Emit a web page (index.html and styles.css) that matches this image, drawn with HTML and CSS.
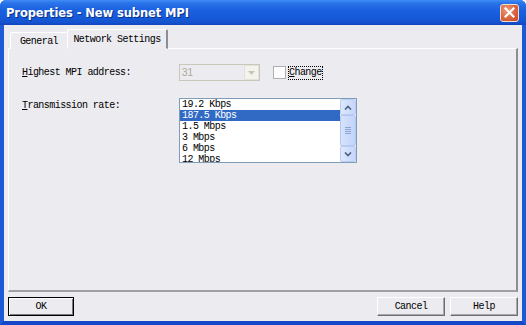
FILE: index.html
```html
<!DOCTYPE html>
<html>
<head>
<meta charset="utf-8">
<link rel="stylesheet" href="styles.css">
</head>
<body>
<div class="window">
  <div class="titlebar">
    <span class="title">Properties - New subnet MPI</span>
    <span class="close"><svg width="11" height="11" viewBox="0 0 11 11"><path d="M1.5 1.5 L9.5 9.5 M9.5 1.5 L1.5 9.5" stroke="#fff" stroke-width="2.2" stroke-linecap="square"/></svg></span>
  </div>
  <div class="client">
    <div class="tabs">
      <div class="tab">General</div>
      <div class="tab active">Network Settings</div>
    </div>
    <div class="panel">
      <div class="row">
        <span class="label"><u>H</u>ighest MPI address:</span>
        <div class="combo">
          <span class="combo-text">31</span>
          <span class="combo-btn"><svg width="7" height="4" viewBox="0 0 7 4"><path d="M0 0 H7 L3.5 4 Z" fill="#c7c5b2"/></svg></span>
        </div>
        <span class="check"></span>
        <span class="check-label"><u>C</u>hange</span>
      </div>
      <div class="row row-list">
        <span class="label"><u>T</u>ransmission rate:</span>
        <div class="listbox">
          <div class="items">
            <div class="item">19.2 Kbps</div>
            <div class="item sel">187.5 Kbps</div>
            <div class="item">1.5 Mbps</div>
            <div class="item">3 Mbps</div>
            <div class="item">6 Mbps</div>
            <div class="item">12 Mbps</div>
          </div>
          <div class="scroll">
            <div class="sbtn"><svg width="8" height="5" viewBox="0 0 8 5"><path d="M1 4.5 L4 1.5 L7 4.5" stroke="#4d6185" stroke-width="1.6" fill="none"/></svg></div>
            <div class="thumb"><span class="grip"></span><span class="grip"></span><span class="grip"></span><span class="grip"></span></div>
            <div class="track"></div>
            <div class="sbtn"><svg width="8" height="5" viewBox="0 0 8 5"><path d="M1 0.5 L4 3.5 L7 0.5" stroke="#4d6185" stroke-width="1.6" fill="none"/></svg></div>
          </div>
        </div>
      </div>
    </div>
    <div class="buttons">
      <button class="btn default">OK</button>
      <span class="spacer"></span>
      <button class="btn">Cancel</button>
      <button class="btn">Help</button>
    </div>
  </div>
</div>
</body>
</html>
```
FILE: styles.css
```css
html, body {
  margin: 0;
  padding: 0;
  background: #ffffff;
}
.window {
  width: 526px;
  height: 325px;
  box-sizing: border-box;
  display: flex;
  flex-direction: column;
  background: #0a55d8;
  border-left: 4px solid #1c5ad8;
  border-right: 4px solid #1c5ad8;
  border-bottom: 4px solid #1448c8;
  border-top-left-radius: 6px;
  border-top-right-radius: 6px;
}
.titlebar {
  height: 25px;
  margin: 0 -4px;
  padding: 0 4px 0 6px;
  display: flex;
  align-items: center;
  background: linear-gradient(#3f8df6 0%, #2a74ea 12%, #1a61e0 40%, #165ad8 70%, #1452cf 90%, #1144b8 100%);
  border-top-left-radius: 6px;
  border-top-right-radius: 6px;
}
.title {
  flex: 1;
  color: #ffffff;
  font-family: "DejaVu Sans", sans-serif;
  font-weight: bold;
  font-size: 11.5px;
  letter-spacing: -0.1px;
  text-shadow: 1px 1px 0 #0a2f8a;
  padding-top: 1px;
}
.close {
  width: 19px;
  height: 18px;
  margin-right: 3px;
  box-sizing: border-box;
  border: 1px solid #f4dccd;
  border-radius: 3px;
  background: radial-gradient(circle at 35% 30%, #ec9a76, #d8603a 60%, #c44a28);
  display: flex;
  align-items: center;
  justify-content: center;
}
.client {
  flex: 1;
  background: #ecebef;
  display: flex;
  flex-direction: column;
  padding: 4px 0 5px 4px;
  font-family: "Liberation Mono", "DejaVu Sans Mono", monospace;
  font-size: 10px;
  letter-spacing: -0.55px;
  color: #000;
}
.tabs {
  display: flex;
  align-items: flex-end;
  height: 20px;
  position: relative;
  z-index: 1;
  margin-bottom: -1px;
}
.tab {
  height: 17px;
  box-sizing: border-box;
  border: 1px solid #fff;
  border-bottom: none;
  border-right: 1px solid #8e8d92;
  border-radius: 2px 2px 0 0;
  padding: 3px 0 0 0;
  text-align: center;
  background: #ecebef;
}
.tab:first-child {
  margin-left: 2px;
  width: 57px;
  border-right: none;
}
.tab.active {
  height: 20px;
  width: 101px;
  padding-top: 4px;
  border-right: 2px solid #8e8d92;
  border-bottom: 1px solid #ecebef;
}
.panel {
  width: 510px;
  height: 244px;
  box-sizing: border-box;
  border-top: 1px solid #fff;
  border-left: 1px solid #fff;
  border-right: 2px solid #8e8d92;
  border-bottom: 2px solid #a09fa4;
  padding: 15px 0 0 13px;
}
.row {
  display: flex;
  align-items: center;
  height: 17px;
}
.label {
  width: 157px;
}
.combo {
  width: 81px;
  height: 17px;
  box-sizing: border-box;
  border: 1px solid #c9c7ba;
  background: #ecebef;
  display: flex;
  align-items: center;
}
.combo-text {
  flex: 1;
  color: #acaa99;
  padding-left: 2px;
  font-family: "Liberation Sans", sans-serif;
  font-size: 10px;
  letter-spacing: 0;
}
.combo-btn {
  width: 15px;
  height: 15px;
  box-sizing: border-box;
  border: 1px solid #e4e2da;
  background: #f4f3ee;
  display: flex;
  align-items: center;
  justify-content: center;
}
.check {
  width: 13px;
  height: 13px;
  box-sizing: border-box;
  border: 1px solid #1c5180;
  border-color: #b0afb0;
  background: #fdfdfd;
  margin-left: 13px;
}
.check-label {
  margin-left: 2px;
  padding: 1px 1px 2px 1px;
  outline: 1px dotted #000;
  outline-offset: -1px;
}
.row-list {
  margin-top: 17px;
  height: auto;
  align-items: flex-start;
}
.row-list .label {
  padding-top: 2px;
}
.listbox {
  width: 178px;
  height: 65px;
  box-sizing: border-box;
  border: 1px solid #7f9db9;
  background: #fff;
  display: flex;
  overflow: hidden;
}
.items {
  flex: 1;
  padding-top: 0;
}
.item {
  height: 11px;
  line-height: 11px;
  padding-left: 2px;
  white-space: nowrap;
}
.item.sel {
  background: #316ac5;
  color: #fff;
}
.scroll {
  width: 16px;
  display: flex;
  flex-direction: column;
  background: #f3f2ee;
  padding: 0 0 0 0;
}
.sbtn {
  height: 16px;
  box-sizing: border-box;
  border: 1px solid #bccdf3;
  border-radius: 2px;
  background: linear-gradient(90deg, #dde8fd, #c5d6fa);
  display: flex;
  align-items: center;
  justify-content: center;
}
.thumb {
  height: 31px;
  box-sizing: border-box;
  border: 1px solid #b3c7f1;
  border-radius: 2px;
  background: linear-gradient(90deg, #d6e3fd, #c3d4fa);
  display: flex;
  flex-direction: column;
  align-items: center;
  justify-content: center;
  gap: 1px;
}
.grip {
  width: 6px;
  height: 1px;
  background: #8ba4d8;
}
.track {
  flex: 1;
}
.buttons {
  display: flex;
  margin-top: 5px;
  padding-right: 4px;
  gap: 5px;
}
.spacer {
  flex: 1;
}
.btn {
  height: 19px;
  width: 68px;
  box-sizing: border-box;
  margin: 0;
  padding: 0;
  background: #ecebef;
  border: 1px solid #fff;
  border-right-color: #6f6e72;
  border-bottom-color: #6f6e72;
  box-shadow: inset -1px -1px 0 #a8a7ab;
  font-family: "Liberation Mono", "DejaVu Sans Mono", monospace;
  font-size: 10px;
  letter-spacing: -0.55px;
  color: #000;
}
.btn.default {
  width: 66px;
  border: 1px solid #000;
  box-shadow: inset 1px 1px 0 #fff, inset -1px -1px 0 #7a797d;
}
```
